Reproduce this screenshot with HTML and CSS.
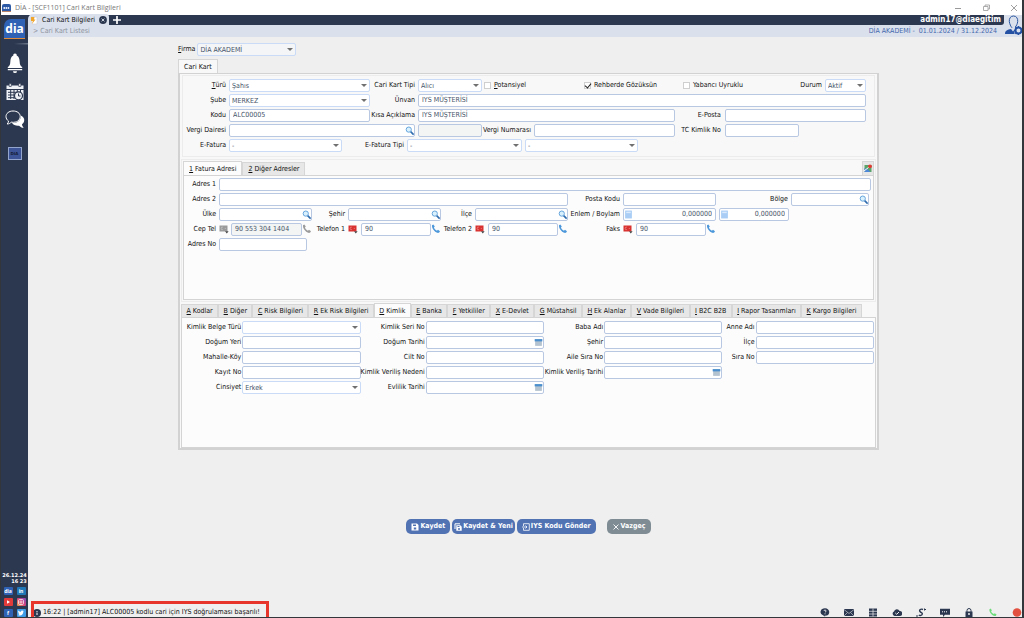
FILE: index.html
```html
<!DOCTYPE html>
<html lang="tr">
<head>
<meta charset="utf-8">
<title>DİA - [SCF1101] Cari Kart Bilgileri</title>
<link rel="stylesheet" href="styles.css">
</head>
<body>
<svg class="defs" aria-hidden="true">
  <symbol id="search" viewBox="0 0 10 10"><path d="M6 6l3 3" stroke="#2f6cae" stroke-width="1.8" stroke-linecap="round"/><circle cx="4.2" cy="4" r="2.9" fill="#d9f0fd" stroke="#66a5dc" stroke-width="1.1"/></symbol>
  <symbol id="cal" viewBox="0 0 8 8"><path d="M1 1h6v6H1z" fill="#b4c3d0"/><path d="M.6 1h6.8v2H.6z" fill="#4b8fce"/></symbol>
  <symbol id="calc" viewBox="0 0 8 8"><path d="M1 .5h6v7H1z" fill="#a9cdf5"/><path d="M2 1.500h4v1.300H2z" fill="#dceafb"/></symbol>
  <symbol id="phone" viewBox="0 0 10 10"><path d="M1 1.300l1.300-.8 1.500 2-.9 1.100c.6 1.500 1.600 2.500 3 3.100l1.100-.9 2 1.500-.8 1.300c-1 .6-2.500.3-4-.8C2.300 6.200.6 3.500 1 1.300z" fill="currentColor"/></symbol>
  <symbol id="flag" viewBox="0 0 10 10"><path d="M.5 1.500h8v6h-8z" fill="currentColor"/><path d="M4 3.200a1.300 1.300 0 1 0 0 2.400" fill="none" stroke="#fff" stroke-opacity=".5" stroke-width=".6"/><path d="M5.800 4.400h1" stroke="#fff" stroke-opacity=".5" stroke-width=".8"/><path d="M6 7.200h3.600L7.800 9.500z" fill="#444"/></symbol>
</svg>

<header class="titlebar">
  <svg class="appicon" viewBox="0 0 9 8"><path d="M0 2q0-2 2-2h5q2 0 2 2v5H0z" fill="#2e5aa5"/><path d="M0 7h9v1H0z" fill="#b8846a"/><path d="M1.500 4h6" stroke="#dfe8f7" stroke-width="1.800" stroke-dasharray="1.500 .6"/></svg>
  <h1>DİA - [SCF1101] Cari Kart Bilgileri</h1>
  <div class="winbtns">
    <button aria-label="Küçült"><svg viewBox="0 0 8 8"><path d="M1 4.500h6" stroke="#999"/></svg></button>
    <button aria-label="Geri yükle"><svg viewBox="0 0 8 8"><path d="M1.500 2.500h4.500v4h-4.500zM3 2.500v-1.500h4.500v4H6" fill="none" stroke="#999" stroke-width=".8"/></svg></button>
    <button aria-label="Kapat"><svg viewBox="0 0 8 8"><path d="M1 1l6 6M7 1L1 7" stroke="#888" stroke-width=".8"/></svg></button>
  </div>
</header>

<div class="shell">
  <nav class="side">
    <div class="logo">dia</div>
    <svg class="sep" viewBox="0 0 20 2"><path d="M0 1L20 .3v1.200z" fill="#aab3c2"/></svg>
    <button aria-label="Bildirimler"><svg width="16" height="21" viewBox="0 0 16 21"><path d="M8 .5a1.700 1.700 0 0 1 1.700 2C12 3.500 12.500 6 12.700 9c.1 2.500.7 4 2.500 5v1H.8v-1c1.800-1 2.400-2.500 2.500-5 .2-3 .7-5.500 3-6.500A1.700 1.700 0 0 1 8 .5zM.8 16h14.400v1.300H.8zM6 18.200h4a2 1.900 0 0 1-4 0z" fill="#fff"/></svg></button>
    <button aria-label="Takvim"><svg width="18" height="18" viewBox="0 0 18 18"><path d="M.5 2.500h17v14.500H.5z" fill="#eef1f6"/><path d="M0 6.500h18M2 9.300h12M2 12h9M2 14.700h9M4.700 7v9M8 7v9M11.300 7v2M14.500 7v2" stroke="#2c3850"/><path d="M3.200.5h2v3h-2zM12.800.5h2v3h-2z" fill="#fff" stroke="#2c3850" stroke-width=".7"/><circle cx="12.500" cy="12.800" r="4" fill="#eef1f6" stroke="#2c3850" stroke-width="1.200"/><path d="M12.500 10.500v2.500h2" fill="none" stroke="#2c3850" stroke-width="1"/></svg></button>
    <button aria-label="Mesajlar"><svg width="20" height="19" viewBox="0 0 20 19"><path d="M8 1C3.800 1 1 3.500 1 6.500c0 2 1 3.500 2.500 4.500 0 1.300-.6 2.300-1.300 3 1.800 0 3-.8 4-1.800 6 .8 9-2.200 9-5.700S12 1 8 1z" fill="#2c3850" stroke="#fff"/><path d="M15.800 5.500c2.500 1 3.700 3 3.400 5.200-.2 1.600-1 2.700-2.200 3.500 0 1.300.7 2.500 1.800 3.500-1.900.1-3.500-.6-4.700-2-3.100.4-5.800-.8-7-2.700 5 .3 9-2.500 8.700-7.500z" fill="#fff"/></svg></button>
    <button class="dia-mini">DIA</button>
    <div class="side-foot">
      <time>26.12.24</time>
      <time>16 23</time>
      <div class="social">
        <a href="#" class="s-dia" aria-label="dia ana sayfa">dia</a>
        <a href="#" class="s-in" aria-label="LinkedIn">in</a>
        <a href="#" class="s-yt" aria-label="YouTube"><svg viewBox="0 0 8 8"><path d="M3 2.300L6 4 3 5.700z" fill="#fff"/></svg></a>
        <a href="#" class="s-ig" aria-label="Instagram"><svg viewBox="0 0 8 8"><rect x="1.500" y="1.500" width="5" height="5" rx="1.300" fill="none" stroke="#fff" stroke-width=".7"/><circle cx="4" cy="4" r="1.100" fill="none" stroke="#fff" stroke-width=".7"/></svg></a>
        <a href="#" class="s-fb" aria-label="Facebook">f</a>
        <a href="#" class="s-tw" aria-label="Twitter"><svg viewBox="0 0 8 8"><path d="M1 6c3 1.500 5.500-.5 5.300-3.500L7 1.800l-1 .1C5 1 4 1.700 4 2.800 3 2.800 2 2.300 1.300 1.500c-.4 1 0 1.700.5 2.200l-.5-.1c0 .7.500 1.200 1.200 1.500C2.200 5.700 1.600 6 1 6z" fill="#fff"/></svg></a>
      </div>
    </div>
  </nav>

  <div class="work">
    <div class="topbar">
      <div class="bars">
        <div class="tabbar">
          <div class="doc-tab">
            <svg width="8" height="9" viewBox="0 0 8 9"><path d="M1 1h6v7H2z" fill="#fff" stroke="#c9ced8" stroke-width=".6"/><path d="M1 1h3.500L4 3.500h1.500L2 8l.8-3H1z" fill="#f0a52c"/></svg>
            <span>Cari Kart Bilgileri</span>
            <button aria-label="Sekmeyi kapat"><svg width="8" height="8" viewBox="0 0 8 8"><circle cx="4" cy="4" r="3.900" fill="#2c3850"/><path d="M2.600 2.600l2.800 2.800M5.400 2.600L2.600 5.400" stroke="#dae0ec" stroke-width=".9"/></svg></button>
          </div>
          <button aria-label="Yeni sekme"><svg width="8" height="8" viewBox="0 0 8 8"><path d="M4 0v8M0 4h8" stroke="#fff" stroke-width="1.700"/></svg></button>
          <strong class="user">admin17@diaegitim</strong>
        </div>
        <div class="crumbs"><span>&gt; Cari Kart Listesi</span><span class="period">DİA AKADEMİ -&nbsp; 01.01.2024 / 31.12.2024</span></div>
      </div>
      <svg class="avatar" viewBox="0 0 18 21"><path d="M9.500 1C6.500 1 5 3.500 5.300 6.500c.3 2.500 1.500 5 2.700 6.300M9.500 1c3 0 4.500 2.500 4.200 5.500-.3 2.500-1.200 4.300-2.500 5.500" fill="none" stroke="#2b56a0" stroke-width="1"/><path d="M1 19c0-3.500 2.500-4.300 6-5l2 2.500 1.500-2v4.500z" fill="#2450a4"/><circle cx="14.500" cy="15.500" r="3" fill="none" stroke="#2450a4" stroke-width="2"/><path d="M14.500 11v1.500M14.500 18.500V20M10 15.500h1.500M11.300 12.300l1 1M11.300 18.700l1-1" stroke="#2450a4" stroke-width="1.300"/></svg>
    </div>

    <main>
      <div class="firma">
        <label for="firma"><u>F</u>irma</label>
        <span class="sel"><select id="firma"><option>DİA AKADEMİ</option></select></span>
      </div>

      <div class="tabs main-tabs"><button class="on">Cari Kart</button></div>
      <form class="card">
        <section class="general">
          <div class="row g1">
            <label for="turu"><u>T</u>ürü</label><span class="sel"><select id="turu"><option>Şahıs</option></select></span>
            <label for="tip">Cari Kart Tipi</label><span class="sel"><select id="tip"><option>Alıcı</option></select></span>
            <label class="chk"><input type="checkbox"><span><u>P</u>otansiyel</span></label>
            <label class="chk"><input type="checkbox" checked><span>Rehberde Gözüksün</span></label>
            <label class="chk"><input type="checkbox"><span>Yabancı Uyruklu</span></label>
            <label for="durum">Durum</label><span class="sel"><select id="durum"><option>Aktif</option></select></span>
          </div>
          <div class="row g2">
            <label for="sube">Şube</label><span class="sel"><select id="sube"><option>MERKEZ</option></select></span>
            <label for="unvan">Ünvan</label><input id="unvan" value="IYS MÜŞTERİSİ">
          </div>
          <div class="row g3">
            <label for="kodu">Kodu</label><input id="kodu" value="ALC00005">
            <label for="kisa">Kısa Açıklama</label><input id="kisa" value="IYS MÜŞTERİSİ">
            <label class="wide" for="eposta">E-Posta</label><input id="eposta">
          </div>
          <div class="row g4">
            <label for="vd">Vergi Dairesi</label><span class="fld mr"><input id="vd"><svg><use href="#search"/></svg></span>
            <input aria-label="Vergi dairesi adı" disabled>
            <label for="vn">Vergi Numarası</label><input id="vn">
            <label class="wide" for="tc">TC Kimlik No</label><input id="tc">
          </div>
          <div class="row g5">
            <label for="ef">E-Fatura</label><span class="sel"><select id="ef"><option>-</option></select></span>
            <label for="eft">E-Fatura Tipi</label><span class="sel mr"><select id="eft"><option>-</option></select></span>
            <span class="sel"><select aria-label="E-Fatura senaryo"><option>-</option></select></span>
          </div>
        </section>

        <section class="address">
          <div class="tabs">
            <button type="button" class="on"><u>1</u> Fatura Adresi</button><button type="button"><u>2</u> Diğer Adresler</button>
            <button type="button" class="map" aria-label="Harita"><svg width="8" height="9" viewBox="0 0 8 9"><path d="M.5 1h7v7h-7z" fill="#5aa469"/><path d="M.5 8V4L4 5.500 6.500 8z" fill="#4c86d6"/><path d="M0 7L7 1.500" stroke="#fff"/><circle cx="6" cy="2.300" r="1.900" fill="#e23b33"/></svg></button>
          </div>
          <div class="pane addr-pane">
            <div class="row a1"><label for="ad1">Adres 1</label><input id="ad1"></div>
            <div class="row a2">
              <label for="ad2">Adres 2</label><input id="ad2">
              <label for="pk">Posta Kodu</label><input id="pk">
              <label for="bolge">Bölge</label><span class="fld"><input id="bolge"><svg><use href="#search"/></svg></span>
            </div>
            <div class="row a3">
              <label for="ulke">Ülke</label><span class="fld"><input id="ulke"><svg><use href="#search"/></svg></span>
              <label for="sehir">Şehir</label><span class="fld"><input id="sehir"><svg><use href="#search"/></svg></span>
              <label for="ilce">İlçe</label><span class="fld"><input id="ilce"><svg><use href="#search"/></svg></span>
              <label for="enlem">Enlem / Boylam</label><span class="fld num mr"><input id="enlem" value="0,000000"><svg><use href="#calc"/></svg></span>
              <span class="fld num"><input aria-label="Boylam" value="0,000000"><svg><use href="#calc"/></svg></span>
            </div>
            <div class="row a4">
              <label for="cep">Cep Tel</label><svg class="ic grey"><use href="#flag"/></svg><input id="cep" class="locked" value="90 553 304 1404" readonly><svg class="ic grey"><use href="#phone"/></svg>
              <label for="t1">Telefon 1</label><svg class="ic red"><use href="#flag"/></svg><input id="t1" value="90"><svg class="ic blue"><use href="#phone"/></svg>
              <label for="t2">Telefon 2</label><svg class="ic red"><use href="#flag"/></svg><input id="t2" value="90"><svg class="ic blue"><use href="#phone"/></svg>
              <label for="faks">Faks</label><svg class="ic red"><use href="#flag"/></svg><input id="faks" value="90"><svg class="ic blue"><use href="#phone"/></svg>
            </div>
            <div class="row a5"><label for="adno">Adres No</label><input id="adno"></div>
          </div>
        </section>

        <section class="details">
          <div class="tabs">
            <button type="button"><u>A</u> Kodlar</button><button type="button"><u>B</u> Diğer</button><button type="button"><u>C</u> Risk Bilgileri</button><button type="button"><u>R</u> Ek Risk Bilgileri</button><button type="button" class="on"><u>D</u> Kimlik</button><button type="button"><u>E</u> Banka</button><button type="button"><u>F</u> Yetkililer</button><button type="button"><u>X</u> E-Devlet</button><button type="button"><u>G</u> Müstahsil</button><button type="button"><u>H</u> Ek Alanlar</button><button type="button"><u>V</u> Vade Bilgileri</button><button type="button"><u>I</u> B2C B2B</button><button type="button"><u>I</u> Rapor Tasarımları</button><button type="button"><u>K</u> Kargo Bilgileri</button>
          </div>
          <div class="pane id-pane">
            <div class="row d">
              <label for="kbt">Kimlik Belge Türü</label><span class="sel"><select id="kbt"><option></option></select></span>
              <label for="ksn">Kimlik Seri No</label><input id="ksn">
              <label for="baba">Baba Adı</label><input id="baba">
              <label for="anne">Anne Adı</label><input id="anne">
            </div>
            <div class="row d">
              <label for="dy">Doğum Yeri</label><input id="dy">
              <label for="dt">Doğum Tarihi</label><span class="fld"><input id="dt"><svg><use href="#cal"/></svg></span>
              <label for="ks">Şehir</label><input id="ks">
              <label for="ki">İlçe</label><input id="ki">
            </div>
            <div class="row d">
              <label for="mk">Mahalle-Köy</label><input id="mk">
              <label for="cn">Cilt No</label><input id="cn">
              <label for="asn">Aile Sıra No</label><input id="asn">
              <label for="sn">Sıra No</label><input id="sn">
            </div>
            <div class="row d">
              <label for="kn">Kayıt No</label><input id="kn">
              <label for="kvn">Kimlik Veriliş Nedeni</label><input id="kvn">
              <label for="kvt">Kimlik Veriliş Tarihi</label><span class="fld"><input id="kvt"><svg><use href="#cal"/></svg></span>
            </div>
            <div class="row d">
              <label for="cins">Cinsiyet</label><span class="sel"><select id="cins"><option>Erkek</option></select></span>
              <label for="et">Evlilik Tarihi</label><span class="fld"><input id="et"><svg><use href="#cal"/></svg></span>
            </div>
          </div>
        </section>
      </form>

      <div class="actions">
        <button><svg viewBox="0 0 8 8"><path d="M.5.5h5.500L7.500 2v5.500h-7z" fill="#fff"/><path d="M2 1.500h3v1.500H2zM2.800 4.500h2.400v2H2.800z" fill="#5273b3"/></svg>Kaydet</button>
        <button class="tight"><svg viewBox="0 0 8 8"><path d="M2.300 2.300h4L7.700 3.700v4H2.300z" fill="#fff"/><path d="M3.500 3h2v1h-2zM4 5.300h2v1.500H4z" fill="#5273b3"/><path d="M1 6V.8h5" fill="none" stroke="#fff"/></svg>Kaydet &amp; Yeni</button>
        <button><svg viewBox="0 0 8 8"><path d="M1.500 3V.7h5.800v6.600H1.500V5M0 4h5M3.500 2.500L5 4 3.500 5.500" fill="none" stroke="#fff" stroke-width=".8"/></svg>IYS Kodu Gönder</button>
        <button class="cancel"><svg viewBox="0 0 8 8"><path d="M1.500 1.500l5 5M6.500 1.500l-5 5" stroke="#fff" stroke-width=".9"/></svg>Vazgeç</button>
      </div>
    </main>

    <footer>
      <div class="notice"><svg width="7" height="8" viewBox="0 0 7 8"><circle cx="3" cy="4" r="4" fill="#2c3850"/><path d="M3 2v1M3 3.600V6" stroke="#fff"/></svg><span>16:22 | [admin17] ALC00005 kodlu cari için IYS doğrulaması başarılı!</span></div>
      <div class="tray">
        <button aria-label="Yardım"><svg viewBox="0 0 10 9"><path d="M5 .3a4.500 3.700 0 1 1-.5 7.400L5.500 9 3 7.300A4.500 3.700 0 0 1 5 .3z" fill="#2c3850"/><path d="M4 3q0-1 1-1t1 1-1 1.300M5 5.300v1" fill="none" stroke="#fff" stroke-width=".8"/></svg></button>
        <button aria-label="E-posta"><svg viewBox="0 0 10 9"><path d="M0 1h10v7H0z" fill="#2c3850"/><path d="M0 1.500L5 5.500l5-4M0 8l3.500-3.500M10 8L6.500 4.500" fill="none" stroke="#fff" stroke-width=".5"/></svg></button>
        <button aria-label="Hesap makinesi"><svg viewBox="0 0 10 9"><path d="M1 .5h8v8H1z" fill="#2c3850"/><path d="M1 3.300h8M1 6h8M5 .5v8" stroke="#efefef" stroke-width=".7"/></svg></button>
        <button aria-label="Bulut"><svg viewBox="0 0 10 9"><path d="M2.500 8A2.400 2.400 0 0 1 2 3.500 3 3 0 0 1 7.600 3 2.500 2.500 0 0 1 7.800 8z" fill="#2c3850"/><path d="M3.300 5l1.400 1.300L7 4" fill="none" stroke="#fff" stroke-width=".9"/></svg></button>
        <button aria-label="Kur"><svg viewBox="0 0 10 9"><path d="M7 1.500C4.500.5 3 2 4 3.500s2.500 1 2.300 2.500S4 8 2.800 7" fill="none" stroke="#2c3850" stroke-width="1.400"/><path d="M0 8h2M8 1.500h2M8.500.5v2" stroke="#2c3850"/></svg></button>
        <button aria-label="Sohbet"><svg viewBox="0 0 10 9"><path d="M0 .8h10v6H5L3 9V6.800H0z" fill="#2c3850"/><path d="M2 3.800h6" stroke="#fff" stroke-dasharray="1 1"/></svg></button>
        <button aria-label="Kilitle"><svg viewBox="0 0 10 9"><path d="M1.500 3.500h7V9h-7z" fill="#2c3850"/><path d="M3 4V2.500a2 2 0 0 1 4 0V4" fill="none" stroke="#2c3850"/><circle cx="5" cy="6" r=".9" fill="#fff"/></svg></button>
        <button class="call" aria-label="Ara"><svg viewBox="0 0 10 10"><use href="#phone"/></svg></button>
        <button aria-label="Kapat"><svg viewBox="0 0 10 9"><circle cx="5" cy="4.500" r="4.300" fill="#e2503f"/></svg></button>
      </div>
    </footer>
  </div>
</div>
</body>
</html>
```

FILE: styles.css
```css
* { box-sizing: border-box; }
html, body { margin: 0; height: 100%; }
body {
  display: flex;
  flex-direction: column;
  overflow: hidden;
  background: #efefef;
  border-right: 2px solid #33363b;
  border-bottom: 1px solid #33363b;
  border-left: 1px solid #33363b;
  font: 7px/13px "DejaVu Sans Condensed", "Noto Sans", sans-serif;
  color: #111;
}
button, input, select { font: inherit; color: inherit; margin: 0; }
button { padding: 0; border: 0; background: none; }
a { text-decoration: none; }
svg { display: block; flex: none; }
.defs { position: absolute; width: 0; height: 0; }

/* window title */
.titlebar { display: flex; align-items: center; height: 15px; padding-left: 1px; background: #fff; }
.appicon { width: 9px; height: 8px; }
.titlebar h1 { margin: 0 auto 0 4px; font: 7px/14px "Open Sans", sans-serif; color: #777; }
.winbtns { display: flex; gap: 20px; padding-right: 4px; }
.winbtns svg { width: 8px; height: 8px; }

.shell { display: flex; flex: 1; min-height: 0; }

/* sidebar */
.side { display: flex; flex-direction: column; align-items: center; width: 27px; padding-top: 4px; background: #2c3850; }
.logo { width: 21px; height: 20px; border-bottom: 1px solid #e08a3c; border-radius: 7px 0 0 0; background: #2f62b5; color: #fff; font: bold 12px/20px "Noto Sans", sans-serif; text-align: center; }
.sep { width: 14px; height: 2px; margin: 4px 0 8px; align-self: flex-end; }
.side > button { margin-bottom: 9px; }
.side > .dia-mini { width: 14px; height: 13px; margin-top: 9px; border: 1px solid #93a5cc; background: #3d5596; color: #141c33; font: bold 4px/10px "DejaVu Sans", sans-serif; }
.side-foot { margin-top: auto; color: #fff; text-align: right; }
.side-foot time { display: block; font: bold 5px/6px "DejaVu Sans", sans-serif; }
.social { display: grid; grid-template-columns: 9px 9px; justify-content: center; gap: 3px 4px; margin-top: 3px; }
.social a { height: 8px; border-radius: 1px; color: #fff; font: bold 5px/8px "Noto Sans", sans-serif; text-align: center; }
.social svg { height: 8px; }
.s-dia { background: #2f62b5; }
.s-in { background: #2178b8; }
.s-yt { background: #e03a3a; }
.s-ig { background: linear-gradient(45deg, #eaa04a, #d8437c 50%, #7a4cc0); }
.s-fb { background: #2f62b5; }
.s-tw { background: #3f9ce6; }

/* workspace header */
.work { display: flex; flex: 1; flex-direction: column; min-width: 0; }
.topbar { display: flex; height: 22px; background: #dae0ec; }
.bars { flex: 1; }
.tabbar { display: flex; align-items: center; height: 10px; background: #2c3850; border-radius: 0 0 3px 0; }
.doc-tab { display: flex; align-items: center; gap: 4px; height: 12px; padding: 0 2px; background: #dae0ec; border-radius: 5px 3px 0 0; margin-right: 4px; }
.user { margin-left: auto; padding-right: 3px; color: #fff; font-size: 8px; line-height: 10px; }
.crumbs { display: flex; justify-content: space-between; padding: 0 7px 0 5px; line-height: 12px; color: #8e949e; }
.period { color: #4468ac; }
.avatar { width: 18px; height: 21px; }

/* form */
main { flex: 1; padding: 6px calc(14.500% - 1px) 0 calc(15% + 1px); }
.firma { display: flex; gap: 2px; margin-bottom: 3px; }
.firma .sel { width: 14%; }
.row { display: grid; min-height: 13px; margin-bottom: 2px; }
.row > * { min-width: 0; }
.row > label { padding-right: 3px; text-align: right; white-space: nowrap; display: flex; justify-content: flex-end; }
.firma label, .row > label { height: 13px; }
.row > .wide { padding-right: 4px; }
.row.d > label { padding-right: 1px; }
.row > label.chk { display: flex; justify-content: flex-start; gap: 3px; align-items: center; padding: 0 0 0 2px; }
label > u { white-space: pre; }
.chk input { appearance: none; position: relative; width: 7px; height: 7px; border: 1px solid #cfcfcf; background: #fff; }
.chk input:checked::after { content: ""; position: absolute; left: 1px; top: -1px; width: 3px; height: 5px; border: solid #222; border-width: 0 1px 1px 0; transform: rotate(40deg); }

.row input:not([type]), select {
  width: 100%;
  height: 13px;
  padding: 0 3px;
  border: 1px solid #b9c8e2;
  border-radius: 2px;
  background: #fff;
  color: #465469;
}
select { display: block; appearance: none; border-color: #c9dbf6; padding: 0 2px; }
.firma select { background: #f3f5f7; }
.row input:disabled, .row input.locked { background: #f3f4f4; }
.sel, .fld { position: relative; }
.sel::after { content: ""; position: absolute; right: 3px; top: 5px; border: solid transparent; border-width: 3px 3px 0; border-top-color: #707070; }
.fld svg { position: absolute; right: 1px; top: 2px; width: 9px; height: 9px; }
.num input { text-align: right; }
.num svg { right: auto; left: 1px; }
.mr { margin-right: 3px; }
.ic { width: 10px; height: 10px; margin-top: 1px; }
.red { color: #d8312f; }
.blue { color: #4b97da; }
.grey { color: #9a9a9a; }

.tabs { display: flex; align-items: flex-end; }
.tabs button { height: 13px; padding: 0 5px; border: 1px solid #d6d6d6; border-bottom: 0; background: #e7e7e7; line-height: 12px; white-space: nowrap; }
.tabs .on { height: 14px; background: #fcfcfc; }
.main-tabs .on { background: #f8f8f8; }

.card { padding: 0 1px; border: 2px solid #d2d2d2; border-top-width: 1px; background: #f8f8f8; }
.general { padding: 3px 8px 2px 1px; border: 1px solid #ececec; margin: 1px 1px 2px 1px; }
.address { border: 1px solid #ececec; padding: 1px; }
.pane { border: 1px solid #d4d4d4; background: #fcfcfc; }
.addr-pane { min-height: 125px; padding: 2px 2px 0 0; }
.id-pane { min-height: 131px; padding: 3px 1px 0 0; }
.details { margin-top: 1px; }
.address .map { width: 12px; height: 14px; margin-left: auto; padding: 0 1px; }
.details .tabs button { flex: 1 0 auto; padding: 0 4px; }
.details .tabs { margin-right: 2%; }

.g1 { grid-template-columns: 45fr 141fr 48fr 64fr 100fr 99fr 98fr 46fr 41fr; }
.g2 { grid-template-columns: 45fr 141fr 48fr 448fr; }
.g3 { grid-template-columns: 45fr 141fr 48fr 257fr 50fr 141fr; }
.g4 { grid-template-columns: 45fr 189fr 64fr 52fr 141fr 50fr 74fr 67fr; }
.g5 { grid-template-columns: 45fr 113fr 65fr 118fr 113fr 228fr; }
.a1 { grid-template-columns: 35fr 652fr; }
.a2 { grid-template-columns: 35fr 349fr 55fr 93fr 75fr 78fr 2fr; }
.a3 { grid-template-columns: 35fr 93fr 36fr 93fr 34fr 93fr 55fr 96fr 70fr 82fr; }
.a4 { grid-template-columns: 35fr 12fr 71fr 10fr 36fr 13fr 70fr 10fr 34fr 13fr 70fr 10fr 55fr 13fr 70fr 10fr 155fr; }
.a5 { grid-template-columns: 35fr 88fr 564fr; }
.d { grid-template-columns: 60fr 118fr 65fr 118fr 60fr 118fr 33fr 118fr; }

.actions { display: flex; justify-content: center; gap: 2px; margin-top: 69px; }
.actions button { display: flex; align-items: center; gap: 1px; height: 15px; padding: 0 5px; border-radius: 5px; background: #5273b3; color: #fff; font-weight: bold; white-space: nowrap; }
.actions .tight { padding: 0 2px; }
.actions svg { width: 8px; height: 8px; }
.actions .cancel { margin-left: 9px; background: #7f8c94; }

/* status bar */
footer { display: flex; align-items: flex-end; justify-content: space-between; }
.notice { display: flex; align-items: center; gap: 2px; height: 16px; margin-left: 3px; padding: 4px 6px 0 0; border: 3px solid #e8352b; border-bottom: 0; white-space: nowrap; }
.tray { display: flex; gap: 14px; }
.tray svg { width: 10px; height: 9px; }
.call { color: #6fdc7c; }
```
